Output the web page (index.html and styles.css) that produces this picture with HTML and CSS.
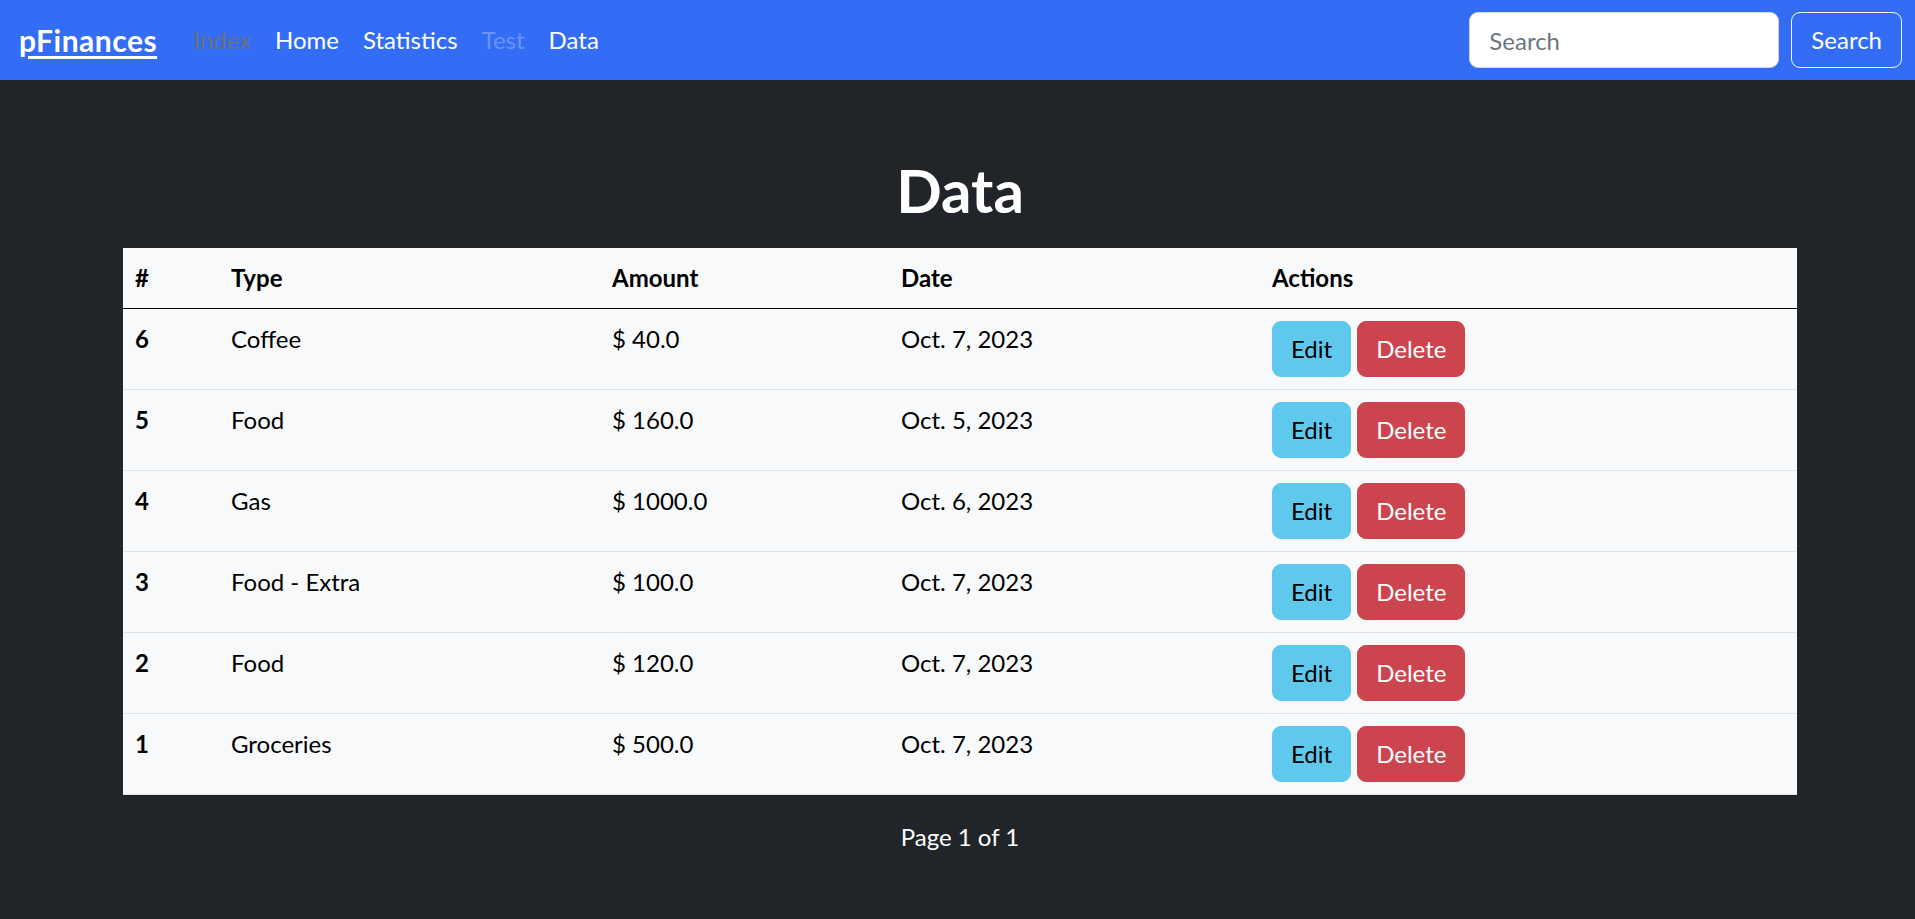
FILE: index.html
```html
<!DOCTYPE html>
<html lang="en">
<head>
<meta charset="utf-8">
<title>pFinances - Data</title>
<link rel="stylesheet" href="styles.css">
</head>
<body>
<div class="page">
  <nav class="navbar">
    <div class="nav-left">
      <a class="brand" href="#">pFinances</a>
      <ul class="nav-links">
        <li><a class="nav-link muted" href="#">Index</a></li>
        <li><a class="nav-link" href="#">Home</a></li>
        <li><a class="nav-link" href="#">Statistics</a></li>
        <li><a class="nav-link faded" href="#">Test</a></li>
        <li><a class="nav-link" href="#">Data</a></li>
      </ul>
    </div>
    <form class="search">
      <input class="search-input" type="search" placeholder="Search">
      <button class="search-btn" type="button">Search</button>
    </form>
  </nav>

  <main class="container">
    <h1 class="title">Data</h1>
    <table class="data-table">
      <colgroup>
        <col class="c-id"><col class="c-type"><col class="c-amount"><col class="c-date"><col class="c-actions">
      </colgroup>
      <thead>
        <tr><th>#</th><th>Type</th><th>Amount</th><th>Date</th><th>Actions</th></tr>
      </thead>
      <tbody>
        <tr><th>6</th><td>Coffee</td><td>$ 40.0</td><td>Oct. 7, 2023</td><td class="actions"><button class="btn btn-edit">Edit</button><button class="btn btn-delete">Delete</button></td></tr>
        <tr><th>5</th><td>Food</td><td>$ 160.0</td><td>Oct. 5, 2023</td><td class="actions"><button class="btn btn-edit">Edit</button><button class="btn btn-delete">Delete</button></td></tr>
        <tr><th>4</th><td>Gas</td><td>$ 1000.0</td><td>Oct. 6, 2023</td><td class="actions"><button class="btn btn-edit">Edit</button><button class="btn btn-delete">Delete</button></td></tr>
        <tr><th>3</th><td>Food - Extra</td><td>$ 100.0</td><td>Oct. 7, 2023</td><td class="actions"><button class="btn btn-edit">Edit</button><button class="btn btn-delete">Delete</button></td></tr>
        <tr><th>2</th><td>Food</td><td>$ 120.0</td><td>Oct. 7, 2023</td><td class="actions"><button class="btn btn-edit">Edit</button><button class="btn btn-delete">Delete</button></td></tr>
        <tr><th>1</th><td>Groceries</td><td>$ 500.0</td><td>Oct. 7, 2023</td><td class="actions"><button class="btn btn-edit">Edit</button><button class="btn btn-delete">Delete</button></td></tr>
      </tbody>
    </table>
    <p class="pager">Page 1 of 1</p>
  </main>
</div>
</body>
</html>
```

FILE: styles.css
```css
html, body {
  margin: 0;
  padding: 0;
  overflow: hidden;
  background: #212529;
}

body {
  font-family: Lato, "Open Sans", "Liberation Sans", sans-serif;
  font-size: 24px;
  line-height: 36px;
  color: #212529;
}

.page {
  width: 1920px;
  min-height: 919px;
  background: #212529;
}

/* Navbar */
.navbar {
  display: flex;
  align-items: center;
  justify-content: space-between;
  height: 80px;
  padding: 0 18px 0 19px;
  background: #336cf5;
  box-sizing: border-box;
}

.nav-left {
  display: flex;
  align-items: center;
}

.brand {
  font-size: 30px;
  font-weight: 700;
  line-height: 45px;
  letter-spacing: 0.5px;
  color: #fff;
  text-decoration: underline;
  text-decoration-thickness: 3px;
  text-underline-offset: 4px;
  margin-right: 24px;
}

.nav-links {
  display: flex;
  list-style: none;
  margin: 0;
  padding: 0;
}

.nav-link {
  display: block;
  padding: 0 12px;
  color: #fff;
  text-decoration: none;
}

.nav-link.muted {
  color: #6b7079;
}

.nav-link.faded {
  color: #6b93f7;
}

.search {
  display: flex;
  align-items: center;
  gap: 12px;
  margin: 0;
}

.search-input {
  width: 310px;
  height: 56px;
  box-sizing: border-box;
  padding: 9px 19px;
  font: inherit;
  color: #212529;
  background: #fff;
  border: 1px solid #ced4da;
  border-radius: 9px;
  outline: none;
}

.search-input::placeholder {
  color: #6c757d;
}

.search-btn {
  height: 56px;
  box-sizing: border-box;
  padding: 9px 19px;
  font: inherit;
  color: #fff;
  background: transparent;
  border: 1px solid #f8f9fa;
  border-radius: 9px;
}

/* Main */
.container {
  max-width: 1710px;
  margin: 0 auto;
  padding: 74px 18px 0;
  box-sizing: border-box;
}

.title {
  margin: 0 0 22px;
  font-size: 60px;
  line-height: 72px;
  font-weight: 700;
  color: #fff;
  text-align: center;
}

.data-table {
  width: 100%;
  table-layout: fixed;
  border-collapse: collapse;
  background: #f8f9fa;
  color: #000;
}

.c-id { width: 96px; }
.c-type { width: 381px; }
.c-amount { width: 289px; }
.c-date { width: 371px; }
.c-actions { width: 537px; }

.data-table th,
.data-table td {
  padding: 12px;
  text-align: left;
  vertical-align: top;
  border-bottom: 1px solid #dee2e6;
}

.data-table th {
  font-weight: 700;
}

.data-table td {
  font-weight: 400;
}

.data-table thead th {
  border-bottom: 1px solid #000;
}

.btn {
  height: 56px;
  box-sizing: border-box;
  padding: 9px 18px;
  font: inherit;
  border: 1px solid transparent;
  border-radius: 9px;
  margin-right: 6px;
  vertical-align: top;
}

.btn-edit {
  background: #5ec9ed;
  border-color: #5ec9ed;
  color: #000;
}

.btn-delete {
  background: #cc454e;
  border-color: #cc454e;
  color: #fff;
}

.pager {
  margin: 24px 0 0;
  text-align: center;
  color: #fff;
}
```
